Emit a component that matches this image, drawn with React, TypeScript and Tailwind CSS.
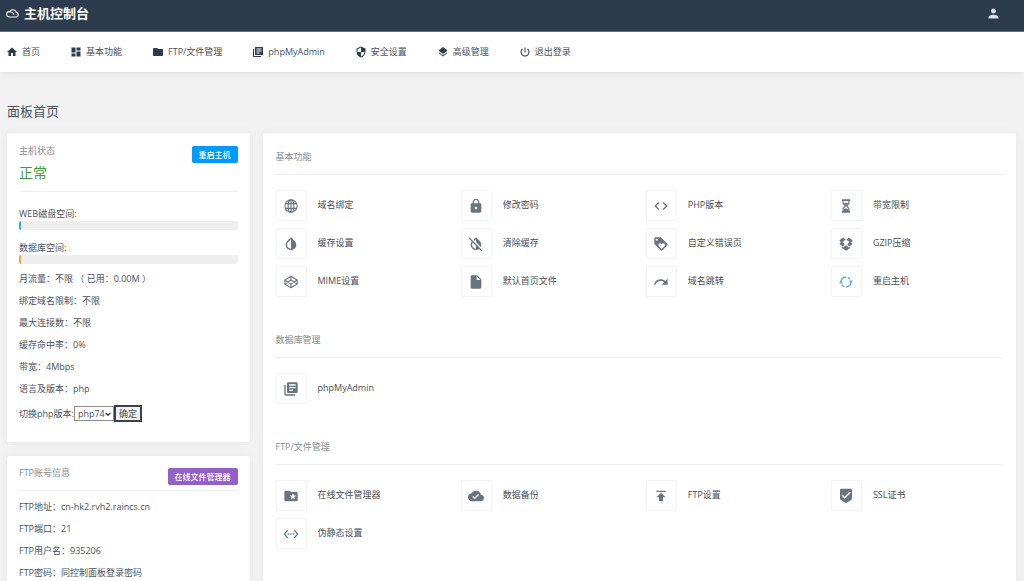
import type { ReactNode } from 'react';
import {
  MdBeenhere,
  MdCloudDone,
  MdCode,
  MdDashboard,
  MdFolder,
  MdFolderSpecial,
  MdHome,
  MdInsertDriveFile,
  MdInvertColors,
  MdInvertColorsOff,
  MdLayers,
  MdLibraryBooks,
  MdLock,
  MdLoyalty,
  MdPerson,
  MdPowerSettingsNew,
  MdPublish,
  MdRedo,
  MdSecurity,
  MdSettingsEthernet,
} from 'react-icons/md';

function CloudLogo() {
  return (
    <svg viewBox="0 0 26 20" className="h-[10px] w-[13px]" fill="none" stroke="currentColor" strokeWidth="2.4" aria-hidden="true">
      <path d="M6 18h14a4.600 4.600 0 0 0 .8-9.100A7.500 7.500 0 0 0 7 7.400a5.300 5.300 0 0 0-1 10.600z" />
      <path d="M7 7.600c4.500-.600 6.500 1.400 9.500 5.400" />
    </svg>
  );
}

function Globe() {
  return (
    <svg viewBox="0 0 24 24" className="size-[14px]" fill="none" stroke="currentColor" strokeWidth="1.9" aria-hidden="true">
      <circle cx="12" cy="12" r="10.5" />
      <ellipse cx="12" cy="12" rx="5" ry="10.5" />
      <path d="M12 1.500v21M3 8h18M3 16h18" />
    </svg>
  );
}

function Hourglass() {
  return (
    <svg viewBox="0 0 16 24" className="h-[14px] w-[10px]" fill="none" stroke="currentColor" strokeWidth="2" aria-hidden="true">
      <path d="M1 2h14M1 22h14" strokeWidth="3" />
      <path d="M3 3v4.500L7 12l-4 4.500V21M13 3v4.500L9 12l4 4.500V21" />
      <path d="M4 7h8l-4 4.500zM4 21v-3l4-2 4 2v3z" fill="currentColor" stroke="none" />
    </svg>
  );
}

function Boxes() {
  return (
    <svg viewBox="0 0 24 24" className="size-[14px]" fill="currentColor" aria-hidden="true">
      <path d="M7.200 1 11.500 4.800 6 8.600 9.800 12.600 6.600 16.200.600 12.200 3.200 8.800.600 5.500zM16.800 1 12.500 4.800 18 8.600 14.200 12.600l3.200 3.600 6-4L20.800 8.800l2.600-3.300z" />
      <path d="m12 14.200 4.800 4 2.400-1.400v2L12 23.500l-7.200-4.700v-2l2.400 1.400z" />
    </svg>
  );
}

function Octahedron() {
  return (
    <svg viewBox="0 0 24 24" className="size-[14px]" fill="none" stroke="currentColor" strokeWidth="1.9" strokeLinejoin="round" aria-hidden="true">
      <path d="M12 2 22.500 8.500v7L12 22 1.500 15.500v-7z" />
      <path d="m1.500 8.500 10.500 7 10.500-7M1.500 15.500l10.500-7 10.500 7M12 2v6.500M12 15.500V22" />
    </svg>
  );
}

function Cycle() {
  return (
    <svg viewBox="0 0 24 24" className="size-[14px]" fill="none" stroke="currentColor" strokeWidth="2.4" aria-hidden="true">
      <path d="M3.500 12.500A8.500 8.500 0 0 1 12 3.500M20.500 11.500A8.500 8.500 0 0 1 12 20.500" />
      <path d="M15 4a8.500 8.500 0 0 1 4 3.200M9 20a8.500 8.500 0 0 1-4-3.200" />
      <path d="M0 14.500h7L3.500 9.500zM24 9.500h-7l3.500 5z" fill="currentColor" stroke="none" />
    </svg>
  );
}

const navItems: { label: string; icon: ReactNode }[] = [
  { label: '首页', icon: <MdHome /> },
  { label: '基本功能', icon: <MdDashboard /> },
  { label: 'FTP/文件管理', icon: <MdFolder /> },
  { label: 'phpMyAdmin', icon: <MdLibraryBooks /> },
  { label: '安全设置', icon: <MdSecurity /> },
  { label: '高级管理', icon: <MdLayers /> },
  { label: '退出登录', icon: <MdPowerSettingsNew /> },
];

type Tool = { label: string; icon: ReactNode; active?: boolean };

const sections: { title: string; tools: Tool[] }[] = [
  {
    title: '基本功能',
    tools: [
      { label: '域名绑定', icon: <Globe /> },
      { label: '修改密码', icon: <MdLock /> },
      { label: 'PHP版本', icon: <MdCode /> },
      { label: '带宽限制', icon: <Hourglass /> },
      { label: '缓存设置', icon: <MdInvertColors /> },
      { label: '清除缓存', icon: <MdInvertColorsOff /> },
      { label: '自定义错误页', icon: <MdLoyalty /> },
      { label: 'GZIP压缩', icon: <Boxes /> },
      { label: 'MIME设置', icon: <Octahedron /> },
      { label: '默认首页文件', icon: <MdInsertDriveFile /> },
      { label: '域名跳转', icon: <MdRedo /> },
      { label: '重启主机', icon: <Cycle />, active: true },
    ],
  },
  {
    title: '数据库管理',
    tools: [{ label: 'phpMyAdmin', icon: <MdLibraryBooks /> }],
  },
  {
    title: 'FTP/文件管理',
    tools: [
      { label: '在线文件管理器', icon: <MdFolderSpecial /> },
      { label: '数据备份', icon: <MdCloudDone /> },
      { label: 'FTP设置', icon: <MdPublish /> },
      { label: 'SSL证书', icon: <MdBeenhere /> },
      { label: '伪静态设置', icon: <MdSettingsEthernet /> },
    ],
  },
];

const hostFacts = [
  '月流量：不限 （ 已用：0.00M ）',
  '绑定域名限制：不限',
  '最大连接数：不限',
  '缓存命中率：0%',
  '带宽：4Mbps',
  '语言及版本：php',
];

const ftpFacts = ['FTP地址：cn-hk2.rvh2.raincs.cn', 'FTP端口：21', 'FTP用户名：935206', 'FTP密码：同控制面板登录密码'];

function Usage({ label, fill }: { label: string; fill: string }) {
  return (
    <div>
      <div className="leading-[14px]">{label}</div>
      <div role="progressbar" aria-label={label} aria-valuenow={1} className="h-[9px] overflow-hidden rounded-xs bg-[#eeeeee]">
        <div className={`h-full w-[2px] ${fill}`} />
      </div>
    </div>
  );
}

function ToolLink({ label, icon, active }: Tool) {
  return (
    <a href="#" className="flex items-center gap-[11px] text-[#474d54]">
      <span
        className={`flex size-[31px] shrink-0 items-center justify-center rounded-xs border border-[#f1f3f5] text-[16px] ${
          active ? 'text-[#5dade8]' : 'text-[#687482]'
        }`}
      >
        {icon}
      </span>
      <span className="truncate pb-[2px]">{label}</span>
    </a>
  );
}

export default function App() {
  return (
    <div className="min-h-screen bg-[#f2f2f2] font-['Open_Sans','Noto_Sans_CJK_SC',sans-serif] text-[9px] leading-[14px] text-[#475260]">
      <header className="flex h-8 items-center justify-between border-b border-[#64778a] bg-[#2c3c4e] pr-[23px] pb-[5px] pl-[6px] text-white">
        <a href="#" className="flex items-center gap-[5px] text-[13px] leading-5 font-bold">
          <CloudLogo />
          主机控制台
        </a>
        <button type="button" aria-label="账号" className="text-[15px] text-[#d5e0ea]">
          <MdPerson />
        </button>
      </header>

      <nav className="flex h-10 items-center gap-[30px] bg-white px-[6px] shadow-[0_1px_8px_rgba(0,0,0,0.08)]">
        {navItems.map((item) => (
          <a key={item.label} href="#" className="flex items-center gap-1 whitespace-nowrap">
            <span className="text-[12px] text-[#2c3c4e]">{item.icon}</span>
            {item.label}
          </a>
        ))}
      </nav>

      <main className="pt-[29px] pr-2 pb-[13px] pl-[7px]">
        <h1 className="mb-3 text-[13px] leading-5">面板首页</h1>

        <div className="grid grid-cols-4 gap-[13px]">
          <div className="flex flex-col gap-[14px]">
            <section className="rounded-xs bg-white px-3 pt-[11px] pb-5 shadow-[0_0_10px_rgba(0,0,0,0.05)]">
              <div className="flex items-start justify-between border-b border-[#eef0f1] pb-2">
                <div>
                  <h2 className="leading-[14px] text-[#868b90]">主机状态</h2>
                  <p className="mt-1 text-[14px] leading-[21px] text-[#3a9f3a]">正常</p>
                </div>
                <button type="button" className="mt-[2px] rounded-xs bg-[#0099ff] px-[7px] text-[8px] leading-[17px] font-medium text-white">
                  重启主机
                </button>
              </div>
              <div className="flex flex-col gap-[11px] pt-[15px] pb-1">
                <Usage label="WEB磁盘空间:" fill="bg-[#2bb3c9]" />
                <Usage label="数据库空间:" fill="bg-[#f0a93c]" />
              </div>
              <ul>
                {hostFacts.map((fact) => (
                  <li key={fact} className="leading-[22px]">
                    {fact}
                  </li>
                ))}
              </ul>
              <form className="mt-[5px] flex items-center" onSubmit={(e) => e.preventDefault()}>
                <label htmlFor="php-version" className="whitespace-nowrap">
                  切换php版本:
                </label>
                <span className="relative flex">
                  <select id="php-version" className="h-[15px] w-10 appearance-none border border-[#8b8b8b] bg-white pl-[3px] text-[9px] leading-[13px]">
                    <option>php74</option>
                  </select>
                  <svg viewBox="0 0 10 6" className="pointer-events-none absolute top-[6px] right-[3px] h-1 w-[6px]" fill="none" stroke="#222" strokeWidth="2" aria-hidden="true">
                    <path d="m1 1 4 4 4-4" />
                  </svg>
                </span>
                <button type="submit" className="h-[17px] border-2 border-[#3c4148] bg-[#efefef] px-[3px] text-[9px] leading-[13px]">
                  确定
                </button>
              </form>
            </section>

            <section className="rounded-xs bg-white px-3 pt-3 pb-[13px] shadow-[0_0_10px_rgba(0,0,0,0.05)]">
              <div className="mb-[5px] flex items-start justify-between border-b border-[#eef0f1] pb-[5px]">
                <h2 className="leading-[10px] text-[#868b90]">FTP账号信息</h2>
                <button type="button" className="rounded-xs bg-[#9261c6] px-[7px] text-[8px] leading-[17px] font-medium whitespace-nowrap text-white">
                  在线文件管理器
                </button>
              </div>
              <ul>
                {ftpFacts.map((fact) => (
                  <li key={fact} className="leading-[22px]">
                    {fact}
                  </li>
                ))}
              </ul>
            </section>
          </div>

          <div className="col-span-3 flex flex-col gap-9 rounded-xs bg-white px-[13px] pt-[17px] pb-[13px] shadow-[0_0_10px_rgba(0,0,0,0.05)]">
            {sections.map((section) => (
              <section key={section.title}>
                <h2 className="mb-[15px] border-b border-[#eef0f1] pb-[10px] text-[#868b90]">{section.title}</h2>
                <div className="grid grid-cols-4 gap-x-[13px] gap-y-[7px]">
                  {section.tools.map((tool) => (
                    <ToolLink key={tool.label} {...tool} />
                  ))}
                </div>
              </section>
            ))}
          </div>
        </div>
      </main>
    </div>
  );
}
